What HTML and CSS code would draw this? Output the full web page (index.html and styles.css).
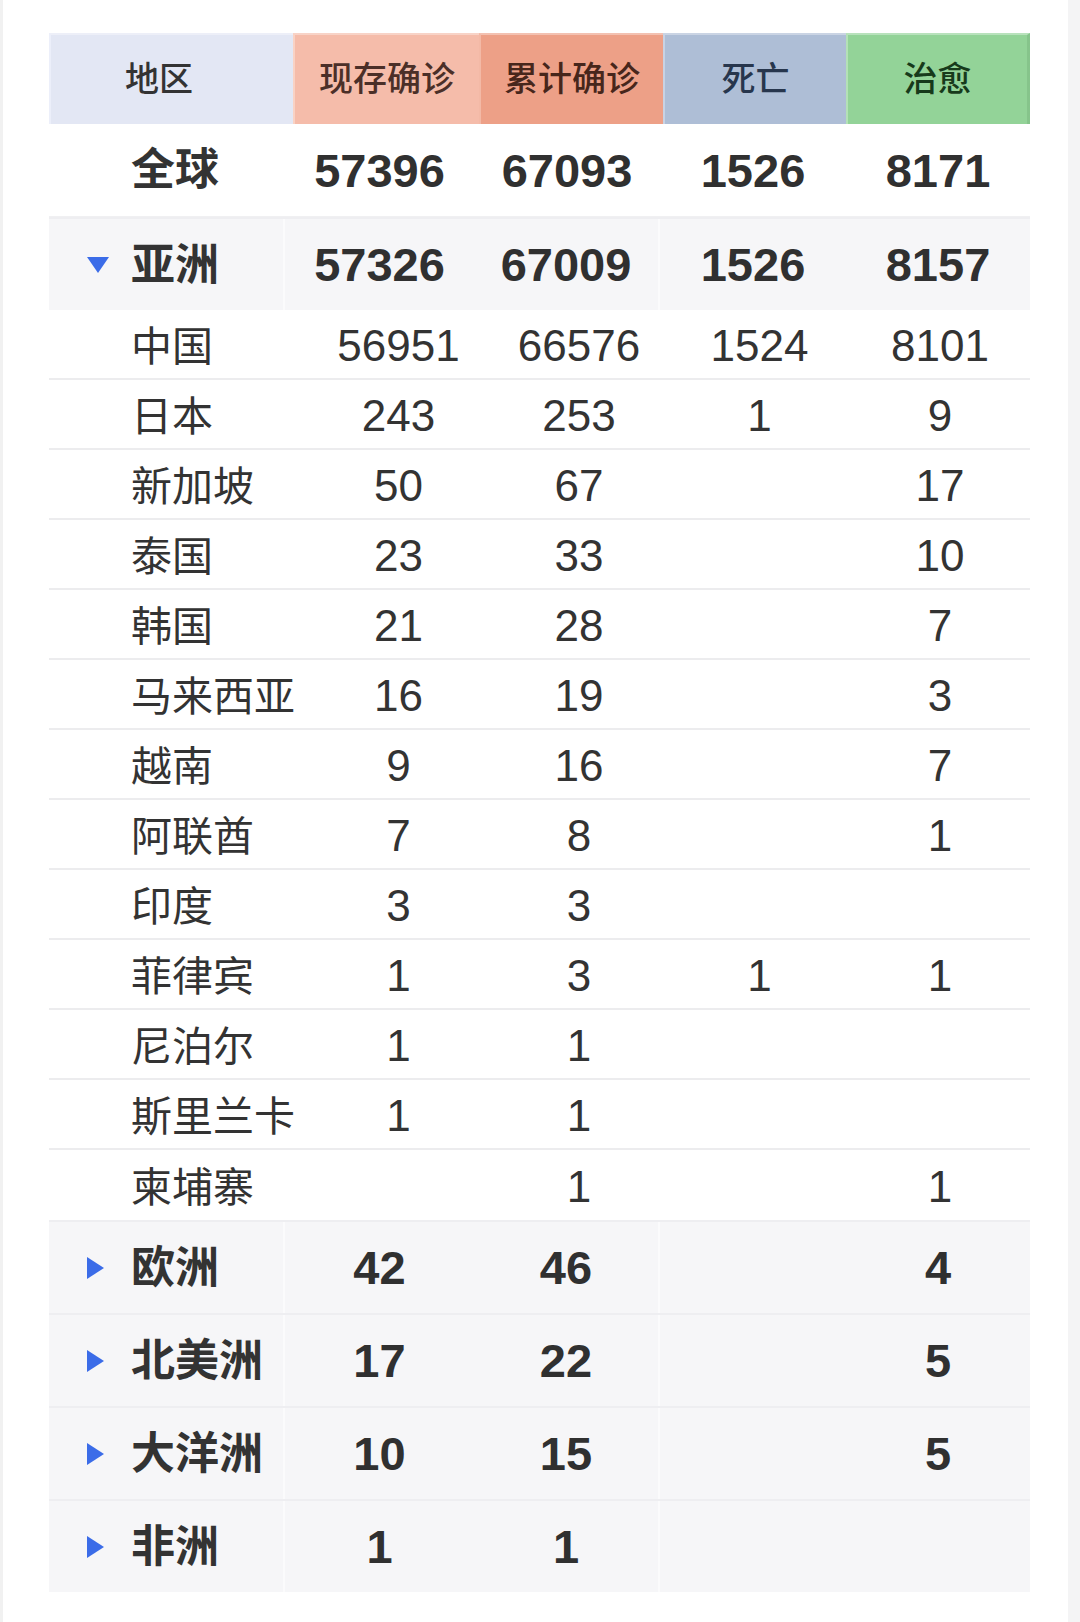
FILE: index.html
```html
<!DOCTYPE html>
<html lang="zh-CN">
<head>
<meta charset="utf-8">
<title>疫情数据</title>
<link rel="stylesheet" href="styles.css">
</head>
<body>
<div class="board">
  <div class="head">
    <div class="hc h-area">地区</div>
    <div class="hc h-now">现存确诊</div>
    <div class="hc h-total">累计确诊</div>
    <div class="hc h-dead">死亡</div>
    <div class="hc h-cure">治愈</div>
  </div>

  <div class="major global">
    <div class="name-cell"><span class="icon-slot"></span><span class="mname">全球</span></div>
    <div class="num">57396</div>
    <div class="num">67093</div>
    <div class="num">1526</div>
    <div class="num">8171</div>
  </div>

  <div class="major cont">
    <div class="name-cell"><span class="icon-slot"><svg class="tri" width="22" height="16" viewBox="0 0 22 16"><path d="M0 0 H22 L11 16 Z" fill="#3b6ce8"/></svg></span><span class="mname">亚洲</span></div>
    <div class="num">57326</div>
    <div class="num">67009</div>
    <div class="num">1526</div>
    <div class="num">8157</div>
  </div>

  <div class="minor"><div class="cname">中国</div><div class="n">56951</div><div class="n">66576</div><div class="n">1524</div><div class="n">8101</div></div>
  <div class="minor"><div class="cname">日本</div><div class="n">243</div><div class="n">253</div><div class="n">1</div><div class="n">9</div></div>
  <div class="minor"><div class="cname">新加坡</div><div class="n">50</div><div class="n">67</div><div class="n"></div><div class="n">17</div></div>
  <div class="minor"><div class="cname">泰国</div><div class="n">23</div><div class="n">33</div><div class="n"></div><div class="n">10</div></div>
  <div class="minor"><div class="cname">韩国</div><div class="n">21</div><div class="n">28</div><div class="n"></div><div class="n">7</div></div>
  <div class="minor"><div class="cname">马来西亚</div><div class="n">16</div><div class="n">19</div><div class="n"></div><div class="n">3</div></div>
  <div class="minor"><div class="cname">越南</div><div class="n">9</div><div class="n">16</div><div class="n"></div><div class="n">7</div></div>
  <div class="minor"><div class="cname">阿联酋</div><div class="n">7</div><div class="n">8</div><div class="n"></div><div class="n">1</div></div>
  <div class="minor"><div class="cname">印度</div><div class="n">3</div><div class="n">3</div><div class="n"></div><div class="n"></div></div>
  <div class="minor"><div class="cname">菲律宾</div><div class="n">1</div><div class="n">3</div><div class="n">1</div><div class="n">1</div></div>
  <div class="minor"><div class="cname">尼泊尔</div><div class="n">1</div><div class="n">1</div><div class="n"></div><div class="n"></div></div>
  <div class="minor"><div class="cname">斯里兰卡</div><div class="n">1</div><div class="n">1</div><div class="n"></div><div class="n"></div></div>
  <div class="minor last"><div class="cname">柬埔寨</div><div class="n"></div><div class="n">1</div><div class="n"></div><div class="n">1</div></div>

  <div class="major cont">
    <div class="name-cell"><span class="icon-slot"><svg class="tri" width="17" height="22" viewBox="0 0 17 22"><path d="M0 0 V22 L17 11 Z" fill="#3b6ce8"/></svg></span><span class="mname">欧洲</span></div>
    <div class="num">42</div>
    <div class="num">46</div>
    <div class="num"></div>
    <div class="num">4</div>
  </div>
  <div class="major cont">
    <div class="name-cell"><span class="icon-slot"><svg class="tri" width="17" height="22" viewBox="0 0 17 22"><path d="M0 0 V22 L17 11 Z" fill="#3b6ce8"/></svg></span><span class="mname">北美洲</span></div>
    <div class="num">17</div>
    <div class="num">22</div>
    <div class="num"></div>
    <div class="num">5</div>
  </div>
  <div class="major cont">
    <div class="name-cell"><span class="icon-slot"><svg class="tri" width="17" height="22" viewBox="0 0 17 22"><path d="M0 0 V22 L17 11 Z" fill="#3b6ce8"/></svg></span><span class="mname">大洋洲</span></div>
    <div class="num">10</div>
    <div class="num">15</div>
    <div class="num"></div>
    <div class="num">5</div>
  </div>
  <div class="major cont">
    <div class="name-cell"><span class="icon-slot"><svg class="tri" width="17" height="22" viewBox="0 0 17 22"><path d="M0 0 V22 L17 11 Z" fill="#3b6ce8"/></svg></span><span class="mname">非洲</span></div>
    <div class="num">1</div>
    <div class="num">1</div>
    <div class="num"></div>
    <div class="num"></div>
  </div>
</div>
</body>
</html>
```

FILE: styles.css
```css
html, body {
  margin: 0;
  padding: 0;
}
body {
  width: 1080px;
  min-height: 1622px;
  background: linear-gradient(to right, #f1f1f1 0, #f1f1f1 3px, #ffffff 3px, #ffffff 1068px, #f4f4f5 1068px, #f4f4f5 1080px);
  color: #333333;
  font-family: "Liberation Sans", "Noto Sans CJK SC", sans-serif;
  overflow: hidden;
}
.board {
  margin-left: 49px;
  padding-top: 33px;
  width: 981px;
}

/* header */
.head {
  display: grid;
  grid-template-columns: 244px 186px 184px 183px 184px;
  height: 91px;
}
.hc {
  display: flex;
  align-items: center;
  justify-content: center;
  font-family: "Noto Sans CJK SC", sans-serif;
  font-size: 34px;
  font-weight: 500;
  box-sizing: border-box;
  border-top: 2px solid rgba(255,255,255,0.35);
  padding-bottom: 7px;
}
.h-area {
  background: #e3e7f4;
  color: #333333;
  padding-right: 26px;
  border-left: 2px solid #eceffa;
}
.h-now {
  background: #f5bcaa;
  color: #4b2f28;
  border-left: 2px solid #f9d2c4;
}
.h-total {
  background: #eda087;
  color: #47261b;
  border-left: 2px solid #f3b9a6;
}
.h-dead {
  background: #aebed6;
  color: #27364d;
  border-left: 2px solid #c8d3e4;
}
.h-cure {
  background: #93d398;
  color: #173a1b;
  border-left: 2px solid #b4e1b7;
  border-right: 3px solid #86c48b;
}

/* bold summary rows */
.major {
  display: grid;
  grid-template-columns: 236px 189px 186px 186px 184px;
  height: 93px;
  box-sizing: border-box;
  align-items: stretch;
}
.global {
  background: #ffffff;
  border-bottom: 1px solid #f0f0f2;
}
.cont {
  background: #f6f6f8;
  border-top: 2px solid #eeeef1;
}
.cont > div:nth-child(1),
.cont > div:nth-child(3) {
  border-right: 2px solid #fbfbfc;
}
.name-cell {
  display: flex;
  align-items: center;
  padding-left: 38px;
  gap: 22px;
}
.icon-slot {
  width: 22px;
  height: 22px;
  display: flex;
  align-items: center;
  justify-content: flex-start;
  flex: none;
}
.tri {
  display: block;
}
.mname {
  font-family: "Noto Sans CJK SC", sans-serif;
  font-size: 44px;
  font-weight: 700;
  color: #333333;
  line-height: 1;
  padding-bottom: 8px;
}
.num {
  display: flex;
  align-items: center;
  justify-content: center;
  font-size: 47px;
  font-weight: 700;
  color: #303030;
}

/* country rows */
.minor {
  display: grid;
  grid-template-columns: 259px 181px 180px 181px 180px;
  height: 70px;
  box-sizing: border-box;
  border-bottom: 2px solid #ececee;
  background: #ffffff;
}
.minor.last {
  border-bottom: none;
}
.cname {
  display: flex;
  align-items: center;
  padding-left: 82px;
  padding-bottom: 3px;
  font-family: "Noto Sans CJK SC", sans-serif;
  font-size: 41px;
  color: #333333;
  white-space: nowrap;
}
.n {
  display: flex;
  align-items: center;
  justify-content: center;
  font-size: 44px;
  color: #333333;
  padding-top: 3px;
}
```
